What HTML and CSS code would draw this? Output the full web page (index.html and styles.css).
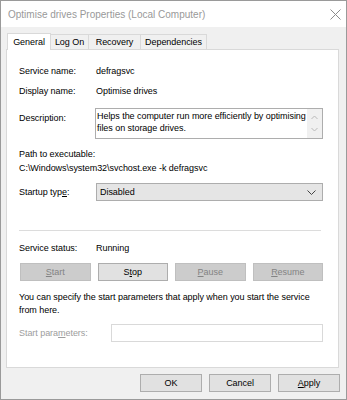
FILE: index.html
```html
<!DOCTYPE html>
<html>
<head>
<meta charset="utf-8">
<link rel="stylesheet" href="styles.css">
</head>
<body>
<div class="window">
  <div class="titlebar">
    <span class="title">Optimise drives Properties (Local Computer)</span>
    <svg class="close" width="11" height="11" viewBox="0 0 11 11"><path d="M0.5 0.5L10.5 10.5M10.5 0.5L0.5 10.5" stroke="#8c8c8c" stroke-width="1" fill="none"/></svg>
  </div>
  <div class="client">
    <div class="tabs">
      <div class="tab active t1">General</div>
      <div class="tab t2">Log On</div>
      <div class="tab t3">Recovery</div>
      <div class="tab t4">Dependencies</div>
    </div>
    <div class="panel">
      <div class="row r1"><span class="lbl">Service name:</span><span>defragsvc</span></div>
      <div class="row r2"><span class="lbl">Display name:</span><span>Optimise drives</span></div>
      <div class="row r3"><span class="lbl desc-lbl">Description:</span>
        <div class="textarea">
          <div class="ta-text">Helps the computer run more efficiently by optimising files on storage drives.</div>
          <div class="ta-scroll">
            <svg width="7" height="5" viewBox="0 0 7 5"><path d="M0.5 4L3.5 1L6.5 4" stroke="#b9b9b9" fill="none"/></svg>
            <svg width="7" height="5" viewBox="0 0 7 5"><path d="M0.5 1L3.5 4L6.5 1" stroke="#b9b9b9" fill="none"/></svg>
          </div>
        </div>
      </div>
      <div class="path-lbl">Path to executable:</div>
      <div class="path">C:\Windows\system32\svchost.exe -k defragsvc</div>
      <div class="row r4"><span class="lbl">Startup typ<u>e</u>:</span>
        <div class="select"><span>Disabled</span>
          <svg width="9" height="5" viewBox="0 0 9 5"><path d="M0.5 0.5L4.5 4.5L8.5 0.5" stroke="#444" fill="none"/></svg>
        </div>
      </div>
      <div class="sep"></div>
      <div class="row r5"><span class="lbl">Service status:</span><span>Running</span></div>
      <div class="btnrow">
        <div class="btn disabled"><u>S</u>tart</div>
        <div class="btn">S<u>t</u>op</div>
        <div class="btn disabled"><u>P</u>ause</div>
        <div class="btn disabled"><u>R</u>esume</div>
      </div>
      <div class="note">You can specify the start parameters that apply when you start the service from here.</div>
      <div class="row r6"><span class="lbl2">Start para<u>m</u>eters:</span><div class="input"></div></div>
    </div>
    <div class="footer">
      <div class="btn fbtn">OK</div>
      <div class="btn fbtn">Cancel</div>
      <div class="btn fbtn"><u>A</u>pply</div>
    </div>
  </div>
</div>
</body>
</html>
```
FILE: styles.css
```css
* { box-sizing: border-box; }
html, body { margin: 0; padding: 0; }
body {
  font-family: "Liberation Sans", Arial, sans-serif;
  font-size: 9px;
  letter-spacing: -0.05px;
  color: #000;
  background: #fff;
}
u { text-decoration: underline; text-underline-offset: 1px; }
.window {
  width: 347px;
  height: 400px;
  border: 1px solid #9a9a9a;
  display: flex;
  flex-direction: column;
  background: #f0f0f0;
}
.titlebar {
  height: 26px;
  background: #fff;
  display: flex;
  align-items: center;
  justify-content: space-between;
  padding: 0 5px 0 7px;
  flex: none;
}
.title {
  font-size: 10px;
  letter-spacing: 0;
  color: #999;
}
.client {
  flex: 1;
  padding: 5px 6px 0 5px;
  display: flex;
  flex-direction: column;
}
.tabs {
  display: flex;
  align-items: flex-end;
  height: 17px;
  padding-left: 1px;
}
.tab {
  height: 15px;
  border: 1px solid #d9d9d9;
  border-bottom: none;
  border-left: none;
  background: #f0f0f0;
  line-height: 14px;
  text-align: center;
}
.t1 { width: 44px; }
.t2 { width: 38px; }
.t3 { width: 52px; }
.t4 { width: 66px; }
.tab.active {
  height: 17px;
  background: #fff;
  border-left: 1px solid #d9d9d9;
  margin-bottom: -1px;
  position: relative;
  z-index: 1;
  line-height: 16px;
}
.panel {
  height: 319px;
  background: #fff;
  border: 1px solid #d9d9d9;
  padding: 14px 15px 0 12px;
  margin-right: 1px;
}
.row {
  display: flex;
  align-items: flex-start;
  line-height: 14px;
}
.lbl { width: 77px; flex: none; }
.r2 { margin-top: 6px; }
.r3 { margin-top: 10px; }
.desc-lbl { padding-top: 3px; }
.textarea {
  flex: 1;
  height: 31px;
  border: 1px solid #adadad;
  display: flex;
  margin-left: -1px;
}
.ta-text {
  flex: 1;
  padding: 1px 0 0 1px;
  line-height: 12px;
}
.ta-scroll {
  width: 15px;
  background: #f0f0f0;
  display: flex;
  flex-direction: column;
  align-items: center;
  justify-content: space-around;
  padding: 3px 0;
}
.ta-scroll svg { display: block; }
.path-lbl { margin-top: 8px; line-height: 14px; }
.path { line-height: 14px; }
.r4 { margin-top: 8px; align-items: center; }
.select {
  flex: 1;
  height: 18px;
  background: #e5e5e5;
  border: 1px solid #adadad;
  display: flex;
  align-items: center;
  justify-content: space-between;
  padding: 0 6px 0 3px;
}
.sep {
  margin-top: 29px;
  height: 1px;
  background: #dcdcdc;
  margin-right: 2px;
}
.r5 { margin-top: 10px; }
.btnrow {
  margin-top: 8px;
  display: grid;
  grid-template-columns: repeat(4, 1fr);
  gap: 7px;
  padding-left: 1px;
}
.btn {
  height: 18px;
  border: 1px solid #adadad;
  background: #e1e1e1;
  display: flex;
  align-items: center;
  justify-content: center;
}
.btn.disabled {
  background: #cccccc;
  border-color: #bfbfbf;
  color: #838383;
}
.note {
  margin-top: 10px;
  line-height: 13px;
}
.r6 { margin-top: 7px; align-items: center; }
.lbl2 { width: 92px; flex: none; color: #9d9d9d; }
.input {
  flex: 1;
  height: 18px;
  border: 1px solid #d9d9d9;
  background: #fff;
}
.footer {
  margin-top: 6px;
  display: flex;
  justify-content: flex-end;
  gap: 7px;
}
.fbtn { width: 62px; }
```
